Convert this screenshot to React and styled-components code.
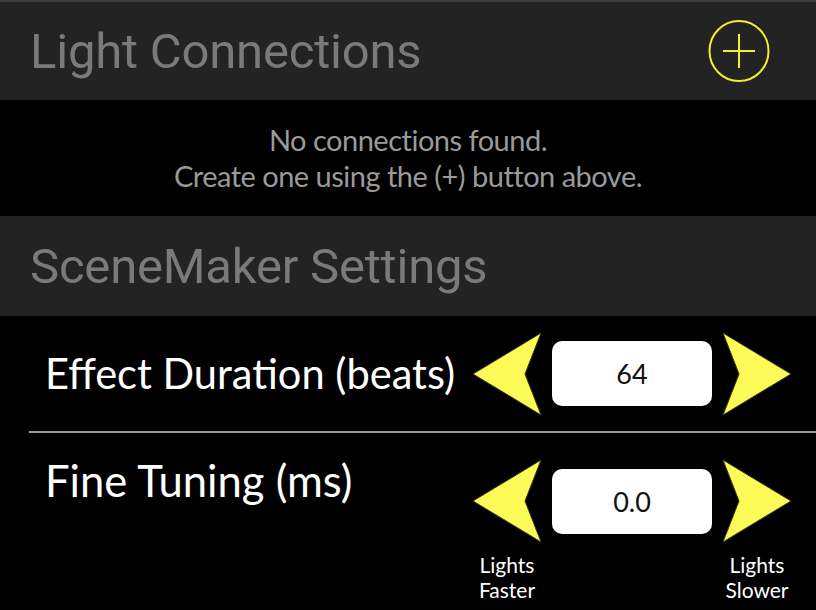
import React from 'react';
import styled, { createGlobalStyle } from 'styled-components';

const GlobalStyle = createGlobalStyle`
  html, body {
    margin: 0;
    padding: 0;
    background: #000;
  }
  body {
    font-family: 'Lato', 'Noto Sans', sans-serif;
    overflow: hidden;
  }
`;

const Page = styled.div`
  width: 816px;
  height: 610px;
  background: #000;
  display: flex;
  flex-direction: column;
  border-top: 2px solid #3b3b3b;
  box-sizing: border-box;
  overflow: hidden;
`;

const SectionHeader = styled.div`
  height: ${(p) => p.height}px;
  background: #232323;
  display: flex;
  align-items: center;
  justify-content: space-between;
  padding: 0 46px 0 30px;
  flex-shrink: 0;
`;

const HeaderTitle = styled.h1`
  margin: 0;
  font-family: 'Roboto', 'Liberation Sans', sans-serif;
  font-weight: 400;
  font-size: 49px;
  color: #7a7a7a;
  letter-spacing: -0.2px;
`;

const AddButton = styled.button`
  width: 62px;
  height: 62px;
  padding: 0;
  border: none;
  background: transparent;
  display: flex;
  align-items: center;
  justify-content: center;
  cursor: pointer;
`;

const EmptyMessage = styled.div`
  height: 116px;
  display: flex;
  flex-direction: column;
  align-items: center;
  justify-content: center;
  color: #9a9a9a;
  font-family: 'Lato', sans-serif;
  font-size: 29px;
  line-height: 36px;
  letter-spacing: -0.5px;
  flex-shrink: 0;
`;

const SettingRow = styled.div`
  display: flex;
  align-items: ${(p) => (p.top ? 'flex-start' : 'center')};
  justify-content: space-between;
  height: ${(p) => p.height}px;
  padding: ${(p) => (p.top ? '26px 24px 0 45px' : '0 24px 0 45px')};
  box-sizing: border-box;
  flex-shrink: 0;
`;

const SettingLabel = styled.div`
  color: #fff;
  font-family: 'Lato', sans-serif;
  font-size: ${(p) => p.size}px;
  line-height: 1.15;
  margin-top: ${(p) => p.offset || 0}px;
`;

const Divider = styled.div`
  height: 2px;
  margin-left: 29px;
  background: #9a9a9a;
  flex-shrink: 0;
`;

const Stepper = styled.div`
  display: grid;
  grid-template-columns: 70px 160px 70px;
  column-gap: 10px;
  align-items: center;
  justify-items: center;
`;

const ArrowButton = styled.button`
  width: 70px;
  height: 84px;
  padding: 0;
  border: none;
  background: transparent;
  cursor: pointer;
  display: block;
`;

const ValueBox = styled.div`
  width: 160px;
  height: 65px;
  background: #fff;
  border-radius: 10px;
  display: flex;
  align-items: center;
  justify-content: center;
  color: #111;
  font-family: 'Lato', sans-serif;
  font-size: 27px;
`;

const HintLabel = styled.div`
  color: #fff;
  font-family: 'Lato', sans-serif;
  font-size: 21px;
  line-height: 25px;
  text-align: center;
  margin-top: 9px;
  white-space: nowrap;
`;

const PlusIcon = () => (
  <svg width="62" height="62" viewBox="0 0 62 62">
    <ellipse cx="31" cy="31" rx="29.5" ry="30" fill="none" stroke="#f4f02a" strokeWidth="2" />
    <line x1="15" y1="31" x2="47" y2="31" stroke="#f4f02a" strokeWidth="2" />
    <line x1="31" y1="14" x2="31" y2="48" stroke="#f4f02a" strokeWidth="2" />
  </svg>
);

const ARROW_POINTS = {
  left: '1,42 69,1 53,42 69,83',
  right: '1,1 69,42 1,83 17,42',
};

const Arrow = ({ dir }) => (
  <svg width="70" height="84" viewBox="0 0 70 84">
    <polygon points={ARROW_POINTS[dir]} fill="#fcfb58" stroke="#3a3a10" strokeWidth="1" />
  </svg>
);

const ValueStepper = ({ value, hints }) => (
  <Stepper>
    <ArrowButton aria-label="decrease"><Arrow dir="left" /></ArrowButton>
    <ValueBox>{value}</ValueBox>
    <ArrowButton aria-label="increase"><Arrow dir="right" /></ArrowButton>
    {hints && (
      <>
        <HintLabel>Lights<br />Faster</HintLabel>
        <div />
        <HintLabel>Lights<br />Slower</HintLabel>
      </>
    )}
  </Stepper>
);

export default function App() {
  return (
    <>
      <GlobalStyle />
      <Page>
        <SectionHeader height={98}>
          <HeaderTitle>Light Connections</HeaderTitle>
          <AddButton aria-label="add connection"><PlusIcon /></AddButton>
        </SectionHeader>
        <EmptyMessage>
          <div>No connections found.</div>
          <div>Create one using the (+) button above.</div>
        </EmptyMessage>
        <SectionHeader height={100}>
          <HeaderTitle>SceneMaker Settings</HeaderTitle>
        </SectionHeader>
        <SettingRow height={115}>
          <SettingLabel size={41.6}>Effect Duration (beats)</SettingLabel>
          <ValueStepper value="64" />
        </SettingRow>
        <Divider />
        <SettingRow top height={177}>
          <SettingLabel size={43.6} offset={-4}>Fine Tuning (ms)</SettingLabel>
          <ValueStepper value="0.0" hints />
        </SettingRow>
      </Page>
    </>
  );
}
